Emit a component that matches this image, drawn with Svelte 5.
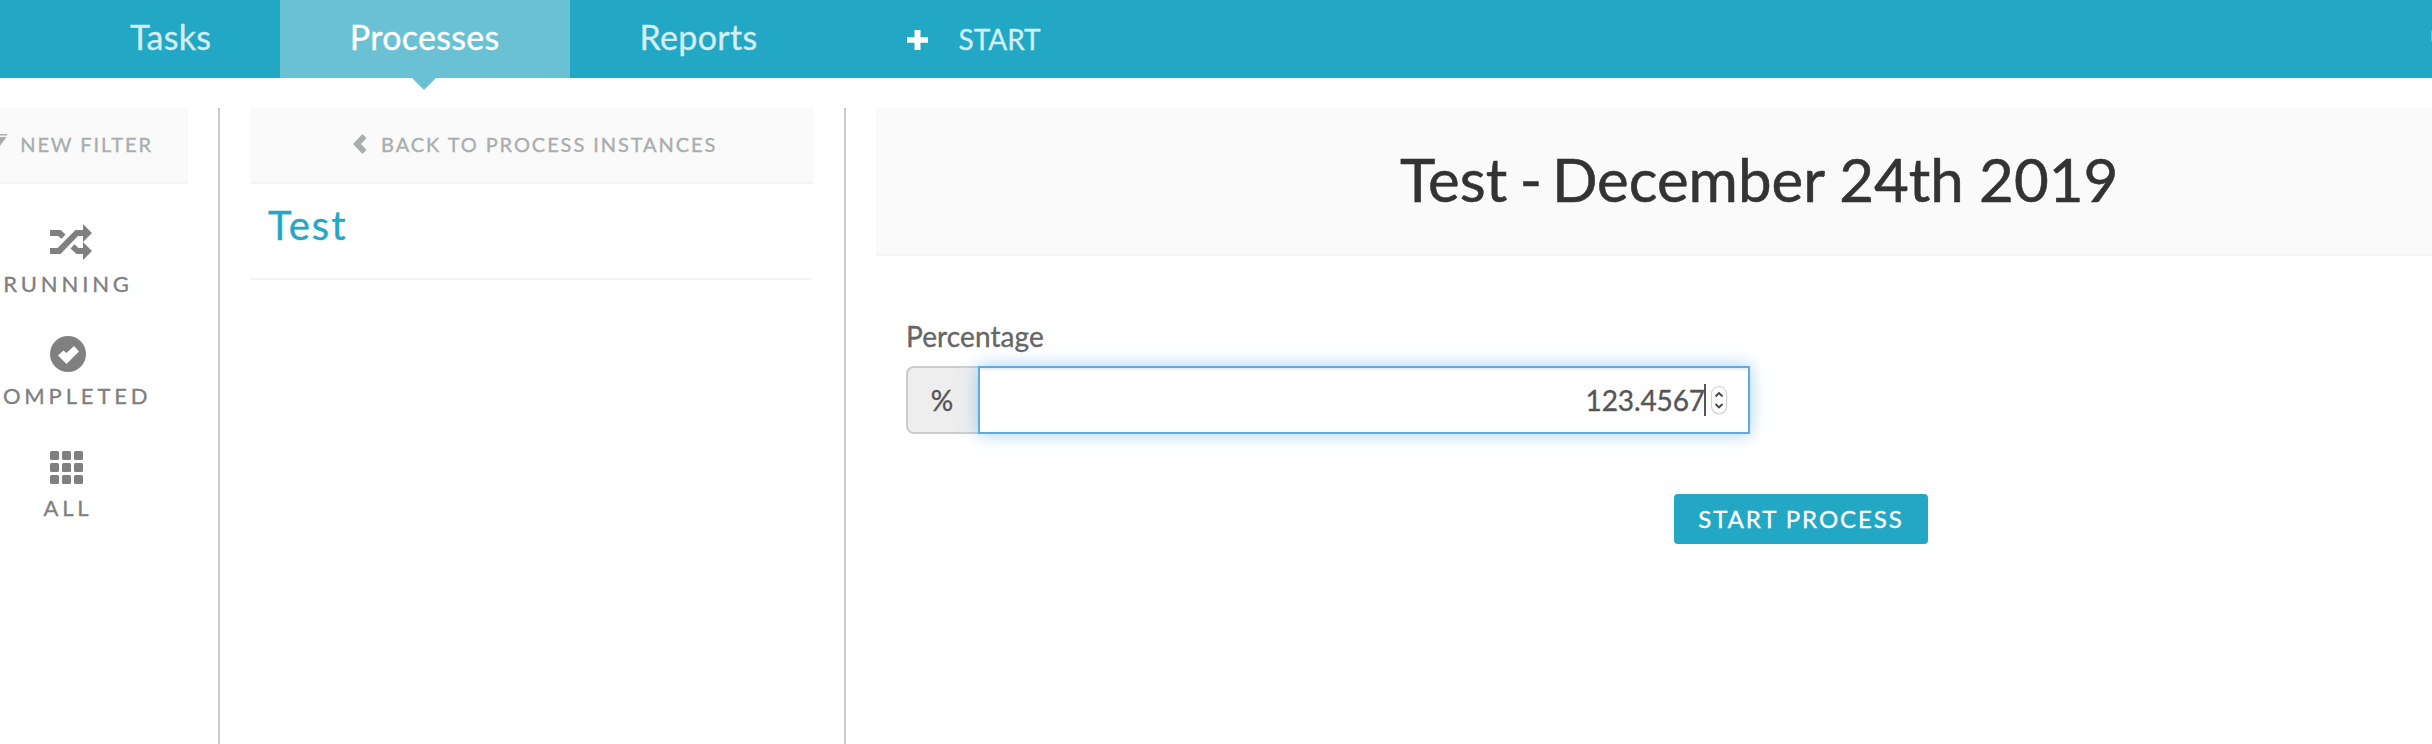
<script>
  const tabs = [
    { label: 'Tasks', active: false },
    { label: 'Processes', active: true },
    { label: 'Reports', active: false }
  ];
  const filters = [
    { label: 'RUNNING', icon: 'shuffle' },
    { label: 'COMPLETED', icon: 'check' },
    { label: 'ALL', icon: 'grid' }
  ];
  const cells = [0, 12, 24];
  const separator = ' - ';
</script>

<div class="app">
  <header>
    <nav>
      {#each tabs as tab}
        <a class="tab" class:active={tab.active}>{tab.label}</a>
      {/each}
    </nav>
    <a class="start">
      <svg width="21" height="20" viewBox="0 0 21 20"><path d="M7.500 0h6v7.200H21v5.600h-7.500V20h-6v-7.200H0V7.200h7.500z" fill="#fff" /></svg>
      <span>START</span>
    </a>
    <i class="edge"></i>
  </header>

  <main>
    <aside class="filters">
      <div class="bar new-filter">
        <svg width="20" height="22" viewBox="0 0 20 22"><path d="M0 0h20v1.500H0zM.5 3h19L12 13v5l-4 3v-8z" fill="#a9adac" /></svg>
        <span>NEW FILTER</span>
      </div>
      <ul>
        {#each filters as f}
          <li>
            <svg width="42" height="36" viewBox="0 0 42 36" fill="#808080">
              {#if f.icon === 'shuffle'}
                <path d="M0 6h10.500l5 4.500-4 4.200L8 12H0zM0 24h7.500L25.500 6H33V0l9 9-9 9v-6h-5L10.500 30H0zM20.500 24.500l4-4.300L28.500 24H33v-6l9 9-9 9v-6h-6.500z" />
              {:else if f.icon === 'check'}
                <path fill-rule="evenodd" d="M18 0a18 18 0 1 0 0 36a18 18 0 1 0 0-36zM8 19.500l5.500-5 3 2.500 7.500-7 5 5.500L16.500 28z" />
              {:else}
                {#each cells as y}
                  {#each cells as x}
                    <rect {x} y={y + 3} width="9" height="9" rx="1.500" />
                  {/each}
                {/each}
              {/if}
            </svg>
            <span>{f.label}</span>
          </li>
        {/each}
      </ul>
    </aside>

    <section class="instances">
      <div class="bar back">
        <svg width="14" height="20" viewBox="0 0 14 20"><path d="M9.500 0L13.500 4 8 10l5.500 6-4 4L0 10z" fill="#a9adac" /></svg>
        <span>BACK TO PROCESS INSTANCES</span>
      </div>
      <div class="process">Test</div>
    </section>

    <section class="detail">
      <h1>Test<span class="dash">{separator}</span>December 24th 2019</h1>
      <form>
        <span class="label">Percentage</span>
        <div class="group">
          <span class="addon">%</span>
          <div class="input">
            <span class="value">123.4567</span>
            <i class="caret"></i>
            <svg class="spin" width="18" height="32" viewBox="0 0 18 32">
              <rect x="1.500" y="3" width="15" height="27" rx="7.500" fill="#fff" stroke="#bbb" stroke-opacity=".5" stroke-width="1.500" />
              <rect x="1.500" y="2.500" width="15" height="27" rx="7.500" fill="#fff" stroke="#d3d3d3" stroke-width="1" />
              <path d="M5.500 12.500L9 9l3.500 3.500M5.500 20L9 23.500l3.500-3.500" fill="none" stroke="#444" stroke-width="1.800" />
            </svg>
          </div>
        </div>
        <button type="button">START PROCESS</button>
      </form>
    </section>
  </main>
</div>

<style>
  :global(body) { background: #fff; overflow: hidden; }
  .app { width: 2432px; height: 744px; overflow: hidden; display: flex; flex-direction: column; font-family: Lato, sans-serif; background: #fff; -webkit-text-stroke: .35px currentColor; }
  header { height: 78px; background: #22a7c4; display: flex; padding-left: 60px; flex: none; }
  nav { display: flex; }
  .tab { padding: 0 70px; font-size: 34px; line-height: 74px; letter-spacing: .3px; color: #d3edf3; height: 78px; position: relative; }
  .tab:first-child { padding-right: 68.500px; }
  .active { background: #6ac1d4; color: #fff; }
  .active::after { content: ''; position: absolute; left: 50%; top: 78px; margin-left: -13px; border: 12px solid transparent; border-top-color: #6ac1d4; border-bottom: 0; }
  .start { margin-left: 80px; display: flex; align-items: center; gap: 30px; color: #d3edf3; font-size: 28px; line-height: 78px; }
  .start svg { margin-top: 2px; }
  .edge { margin: 31px 0 0 auto; width: 1px; height: 10px; background: #6ac1d4; }
  main { display: flex; flex: 1; padding-top: 30px; }
  .filters { width: 218px; flex: none; border-right: 2px solid #cacaca; }
  .bar { height: 74px; background: #fafafa; border-bottom: 2px solid #f4f4f4; display: flex; color: #a9adac; font-size: 20px; line-height: 72px; letter-spacing: 1.92px; white-space: nowrap; }
  .bar svg { flex: none; margin-top: 26px; }
  .new-filter { width: 188px; overflow: hidden; }
  .new-filter svg { margin-left: -13px; margin-right: 13.200px; }
  ul { list-style: none; margin: 0; padding: 40px 0 0; width: 136px; }
  li { height: 112px; display: flex; flex-direction: column; align-items: center; gap: 10px; font-size: 22px; line-height: 27px; letter-spacing: 3.85px; color: #808080; }
  li svg { flex: none; margin-left: 50px; align-self: flex-start; }
  .instances { width: 564px; flex: none; padding: 0 30px; border-right: 2px solid #cacaca; }
  .back svg { margin-left: 103px; margin-right: 14px; }
  .process { width: 544px; height: 94px; padding-left: 18px; border-bottom: 2px solid #f4f4f4; line-height: 82px; font-size: 40px; letter-spacing: 2px; color: #22a7c4; }
  .detail { flex: 1; padding-left: 30px; }
  h1 { margin: 0; height: 146px; border-bottom: 2px solid #f4f4f4; background: #fafafa; color: #333; font-weight: 400; font-size: 60px; line-height: 142px; padding-left: 524px; -webkit-text-stroke-width: .55px; }
  .dash { letter-spacing: -2.8px; }
  form { padding: 60px 0 0 30px; display: flex; flex-direction: column; align-items: flex-start; }
  .label { font-size: 28px; line-height: 40px; margin-bottom: 10px; letter-spacing: .1px; color: #666; }
  .group { display: flex; width: 844px; height: 68px; box-sizing: border-box; font-size: 28px; line-height: 64px; color: #555; }
  .addon { box-sizing: border-box; width: 72px; padding-right: 2px; border: 2px solid #ccc; border-right: 0; border-radius: 8px 0 0 8px; background: #eee; text-align: center; }
  .input { flex: 1; border: 2px solid #5dade5; background: #fff; box-shadow: inset 0 2px 2px rgba(0,0,0,.075), 0 0 16px rgba(102,175,233,.6); display: flex; justify-content: flex-end; align-items: center; padding-right: 18px; }
  .value { letter-spacing: -.1px; }
  .caret { width: 2px; height: 32px; background: #555; margin-left: -1px; }
  .spin { margin: 0 2px 0 4px; }
  button { margin: 60px 0 0 768px; width: 254px; height: 50px; border: 0; border-radius: 4px; padding: 0; background: #22a7c4; color: #fff; font: 24px/50px Lato, sans-serif; letter-spacing: 1.95px; white-space: nowrap; }
</style>
